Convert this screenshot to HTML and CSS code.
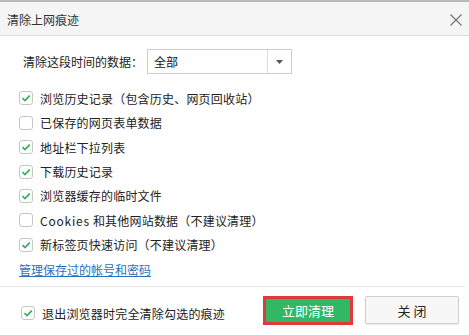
FILE: index.html
```html
<!DOCTYPE html>
<html>
<head>
<meta charset="utf-8">
<link rel="stylesheet" href="styles.css">
</head>
<body>
<div class="dialog">
  <div class="titlebar">
    <span class="title">清除上网痕迹</span>
    <span class="close"><svg width="12" height="12" viewBox="0 0 12 12"><path d="M0.5 0.5 L11.5 11.5 M11.5 0.5 L0.5 11.5" stroke="#6f6f6f" stroke-width="1.1" fill="none"/></svg></span>
  </div>
  <div class="content">
    <div class="range">
      <span class="range-label">清除这段时间的数据：</span>
      <div class="select"><span class="select-value">全部</span><span class="select-arrow"><svg width="7" height="4" viewBox="0 0 7 4"><path d="M0 0 H7 L3.5 4 Z" fill="#555"/></svg></span></div>
    </div>
    <ul class="options">
      <li class="option"><span class="cb"><svg width="12" height="12" viewBox="0 0 12 12"><path d="M2.5 6.2 L5 8.6 L9.8 3.6" stroke="#3aae62" stroke-width="1.8" fill="none"/></svg></span><span class="label">浏览历史记录（包含历史、网页回收站）</span></li>
      <li class="option"><span class="cb"></span><span class="label">已保存的网页表单数据</span></li>
      <li class="option"><span class="cb"><svg width="12" height="12" viewBox="0 0 12 12"><path d="M2.5 6.2 L5 8.6 L9.8 3.6" stroke="#3aae62" stroke-width="1.8" fill="none"/></svg></span><span class="label">地址栏下拉列表</span></li>
      <li class="option"><span class="cb"><svg width="12" height="12" viewBox="0 0 12 12"><path d="M2.5 6.2 L5 8.6 L9.8 3.6" stroke="#3aae62" stroke-width="1.8" fill="none"/></svg></span><span class="label">下载历史记录</span></li>
      <li class="option"><span class="cb"><svg width="12" height="12" viewBox="0 0 12 12"><path d="M2.5 6.2 L5 8.6 L9.8 3.6" stroke="#3aae62" stroke-width="1.8" fill="none"/></svg></span><span class="label">浏览器缓存的临时文件</span></li>
      <li class="option"><span class="cb"></span><span class="label"><span class="latin">Cookies</span> 和其他网站数据（不建议清理）</span></li>
      <li class="option"><span class="cb"><svg width="12" height="12" viewBox="0 0 12 12"><path d="M2.5 6.2 L5 8.6 L9.8 3.6" stroke="#3aae62" stroke-width="1.8" fill="none"/></svg></span><span class="label">新标签页快速访问（不建议清理）</span></li>
      <li class="option"><a class="link" href="#">管理保存过的帐号和密码</a></li>
    </ul>
  </div>
  <div class="footer">
    <div class="footer-check"><span class="cb"><svg width="12" height="12" viewBox="0 0 12 12"><path d="M2.5 6.2 L5 8.6 L9.8 3.6" stroke="#3aae62" stroke-width="1.8" fill="none"/></svg></span><span class="label">退出浏览器时完全清除勾选的痕迹</span></div>
    <div class="buttons">
      <button class="btn btn-primary">立即清理</button>
      <button class="btn btn-default">关 闭</button>
    </div>
  </div>
</div>
</body>
</html>
```
FILE: styles.css
```css
html, body {
  margin: 0;
  padding: 0;
  background: #ffffff;
}
body {
  font-family: "Noto Sans CJK SC", "Noto Sans", sans-serif;
  font-size: 12px;
  color: #222;
}
.dialog {
  width: 469px;
  height: 335px;
  display: flex;
  flex-direction: column;
  box-sizing: border-box;
  background: #fff;
}
.titlebar {
  height: 31px;
  border-top: 2px solid #b9b9b9;
  border-bottom: 1px solid #dcdcdc;
  background: #f5f5f5;
  display: flex;
  align-items: center;
  justify-content: space-between;
  padding: 2px 7px 0 7px;
  box-sizing: content-box;
}
.title {
  font-size: 12px;
  color: #333;
  line-height: 14px;
}
.close {
  display: flex;
}
.content {
  padding: 13px 0 0 19px;
  flex: 1;
}
.range {
  display: flex;
  align-items: center;
  height: 25px;
  padding-left: 4px;
}
.range-label {
  width: 124px;
  color: #222;
}
.select {
  width: 143px;
  height: 23px;
  border: 1px solid #cbcfd3;
  display: flex;
  align-items: center;
  justify-content: space-between;
}
.select-value {
  padding-left: 6px;
  color: #111;
}
.select-arrow {
  width: 23px;
  height: 23px;
  border-left: 1px solid #dcdcdc;
  display: flex;
  align-items: center;
  justify-content: center;
}
.options {
  list-style: none;
  margin: 12px 0 0 0;
  padding: 0;
}
.option {
  height: 24.45px;
  display: flex;
  align-items: center;
}
.cb {
  width: 12px;
  height: 12px;
  border: 1px solid #c6c6c6;
  border-radius: 3px;
  background: #fff;
  display: flex;
  align-items: center;
  justify-content: center;
  flex: none;
}
.label {
  margin-left: 7px;
  color: #222;
  letter-spacing: 0.2px;
}
.latin {
  letter-spacing: 0.8px;
}
.link {
  color: #2a6fba;
  text-decoration: underline;
}
.footer {
  height: 49px;
  border-top: 1px solid #e6e6e6;
  margin-right: 4px;
  display: flex;
  justify-content: space-between;
  padding: 9px 6px 0 21px;
  box-sizing: border-box;
}
.footer-check {
  display: flex;
  align-items: center;
  height: 34px;
}
.buttons {
  display: flex;
  gap: 12px;
  align-items: flex-start;
}
.btn {
  font-family: "Noto Sans CJK SC", "Noto Sans", sans-serif;
  font-size: 13px;
  height: 29px;
  box-sizing: border-box;
  padding: 0;
  cursor: pointer;
}
.btn-primary {
  width: 90px;
  background: #31b865;
  color: #fff;
  border: 3px solid #e2393c;
}
.btn-default {
  width: 94px;
  height: 28px;
  background: #f7f7f7;
  color: #222;
  border: 1px solid #cfcfcf;
  border-radius: 2px;
  box-shadow: 0 1px 1px rgba(0,0,0,0.08);
}
```
